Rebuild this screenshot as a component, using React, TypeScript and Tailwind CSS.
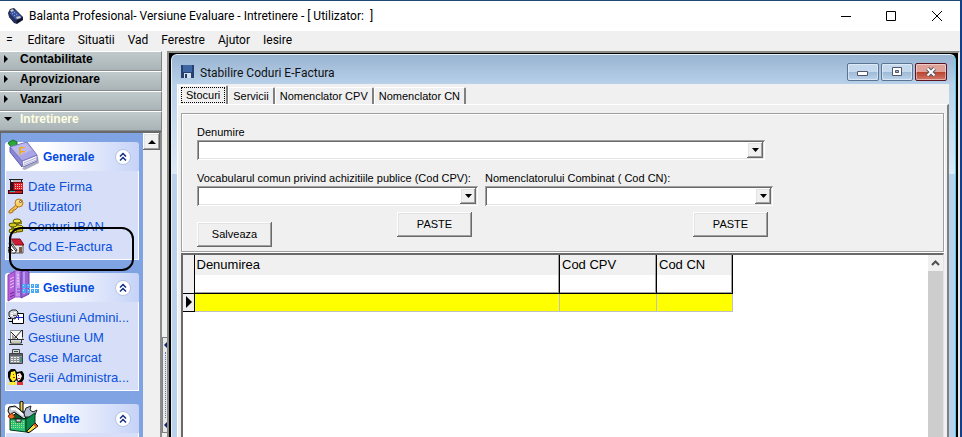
import { ReactNode, useState } from 'react'

const accordion = ['Contabilitate', 'Aprovizionare', 'Vanzari', 'Intretinere']
const menus = ['Editare', 'Situatii', 'Vad', 'Ferestre', 'Ajutor', 'Iesire']
const tabs = ['Stocuri', 'Servicii', 'Nomenclator CPV', 'Nomenclator CN']

const raised =
  'bg-[#f0f0f0] shadow-[inset_-1px_-1px_0_#696969,inset_1px_1px_0_#fff,inset_-2px_-2px_0_#a0a0a0,inset_2px_2px_0_#e3e3e3]'

function Icon({ children, size = 16 }: { children: ReactNode; size?: number }) {
  return (
    <svg
      width={size}
      height={size}
      viewBox={`0 0 ${size} ${size}`}
      className="shrink-0"
      aria-hidden="true"
    >
      {children}
    </svg>
  )
}

const AppIcon = () => (
  <Icon>
    <path d="M0 5 L2 1 L6 0 L9 3 L15 9 L15 12 L9 16 L6 15 L1 9 Z" fill="#1a2440" />
    <path d="M1 5 L7 2 L14 9 L8 12 Z" fill="#3c56a0" />
    <path d="M1 6 L8 13 L8 15 L1 9 Z" fill="#26366c" />
    <path d="M9 13 L14 10 L14 12 L9 15 Z" fill="#0c1020" />
    <path d="M2 2 L5 1 L6 3 L3 4 Z M8 9 L12 8 L13 10 L9 11 Z" fill="#c3cad2" />
    <path d="M4 5h1v1h-1zM6 4h1v1h-1zM6 7h1v1h-1zM8 6h1v1h-1z" fill="#8ba0dc" />
  </Icon>
)

const BookIcon = () => (
  <Icon size={32}>
    <path d="M15 30 L18 31 L32 24 L31 18 L29 17 Z" fill="#70789c" opacity=".6" />
    <path d="M1 4 L6 1 L10 3 L10 7 L4 8 Z" fill="#2aa83a" stroke="#0c6c1c" />
    <path d="M3 8 L3 13 L15 28 L16 22 Z" fill="#8a86d6" stroke="#5e5aa8" />
    <path d="M15 22 L30 16 L30 22 L16 28 Z" fill="#f1f1fb" stroke="#7873b0" />
    <path d="M17 24 L29 19 M17 26 L29 21" stroke="#b4b4dc" />
    <path d="M3 8 L20 3 L30 16 L15 22 Z" fill="#a9a5e6" stroke="#7a76c4" />
    <path d="M4 8 L19 4 L25 11 L12 17 Z" fill="#c6c4f4" opacity=".6" />
    <text x="12" y="16" fontSize="11" fontWeight="bold" fontFamily="Liberation Sans, sans-serif" fill="#f0ac10">
      F
    </text>
  </Icon>
)

const ServerIcon = () => (
  <Icon size={32}>
    <path d="M1 5 L8 1 L8 27 L1 31 Z" fill="#b65fd8" stroke="#8a3cb4" />
    <path d="M3 9 L7 7 M3 12 L7 10 M3 15 L7 13 M3 18 L7 16" stroke="#edc6fa" />
    <path d="M3 24 L7 22 M3 27 L7 25" stroke="#6a2496" />
    <path d="M8 1 L13 0 L14 27 L8 27 Z" fill="#c696f0" stroke="#9458cc" />
    <path d="M10 5h2M10 8h2M10 11h2M10 14h2" stroke="#f2dcff" />
    <path d="M10 19h3M10 22h3" stroke="#7d44b8" />
    <path d="M14 2 L18 0 L22 2 L22 24 L14 28 Z" fill="#9664d4" stroke="#6c3cac" />
    <path d="M17 2v22" stroke="#bb96ec" strokeWidth="2" />
    <path
      d="M15 14h4v4h-4zM20 14h3v4h-3zM24 14h3v4h-3zM28 14h4v4h-4zM15 19h4v4h-4zM20 19h3v4h-3zM24 19h3v4h-3zM28 19h4v4h-4z"
      fill="#4aa6f4"
    />
    <path d="M16 15h1v1h-1zM21 15h1v1h-1zM25 15h1v1h-1zM29 15h1v1h-1zM16 20h1v1h-1zM21 20h1v1h-1zM25 20h1v1h-1zM29 20h1v1h-1z" fill="#b4e4ff" />
  </Icon>
)

const ToolboxIcon = () => (
  <Icon size={32}>
    <path d="M13 1 L15 0 L16 1 L16 12 L13 12 Z" fill="#efcf4a" stroke="#000" />
    <path d="M3 18 L10 11 L28 11 L19 18 Z" fill="#0a5c30" stroke="#000" />
    <path d="M2 6 L8 5 L12 8 L20 15 L17 18 L7 11 L3 14 L1 10 Z" fill="#c6cad2" stroke="#000" />
    <path d="M4 8 L9 8 L16 14" fill="none" stroke="#fff" strokeWidth="2" />
    <path d="M17 12 L19 7 L24 5 L23 9 L26 11 L30 9 L28 14 L23 16 L18 16 Z" fill="#b4bed0" stroke="#222" />
    <path d="M1 15 L5 12 L8 16 L4 19 Z" fill="#f06a28" stroke="#7c2300" />
    <path d="M3 18 L19 18 L19 31 L3 29 Z" fill="#2cc07a" stroke="#003c18" />
    <path d="M19 18 L28 12 L28 24 L19 31 Z" fill="#0a8a4c" stroke="#003c18" />
    <path d="M4 20.500h14M4 22.500h14M4 24.500h14M4 26.500h14" stroke="#a4e87c" strokeDasharray="1 1" />
    <path d="M9 18h5v3h-5z" fill="#d8dde0" stroke="#222" />
    <path d="M20 30 L28 22 L31 25 L23 31 L20 32 Z" fill="#f7dc4c" stroke="#000" />
    <path d="M27 23 L30 26" stroke="#e0521b" strokeWidth="2" />
  </Icon>
)

const DateIcon = () => (
  <Icon>
    <path d="M1 1.500h14M2.500 1v4M13.500 1v3" stroke="#222" fill="none" />
    <path d="M5 2h8v2h-8z" fill="#bfc3c8" />
    <path d="M2 4h3v9h-3z" fill="#31101a" />
    <path d="M5 4h10v9h-10z" fill="#701018" />
    <path d="M6 5h9v7h-9z" fill="#e01c28" />
    <path d="M0 12h15v4h-15z" fill="#3a0a10" />
    <path d="M1 13h13v2h-13z" fill="#d01c28" />
    <path d="M7 6h1v1h-1zM9 6h1v1h-1zM11 6h1v1h-1zM13 6h1v1h-1zM7 8h1v1h-1zM9 8h1v1h-1zM11 8h1v1h-1zM13 8h1v1h-1zM7 10h1v1h-1zM9 10h1v1h-1zM11 10h1v1h-1zM13 10h1v1h-1z" fill="#ffc4b4" />
    <path d="M2 13.500h5" stroke="#28b7b9" />
  </Icon>
)

const KeyIcon = () => (
  <Icon>
    <path d="M8 7 L1 13 L1 15 L3 15 L5 14 L5 12 L7 12 L10 9 Z" fill="#f2bd49" stroke="#a8701c" />
    <circle cx="11" cy="5" r="4" fill="#f8cf68" stroke="#b87c20" />
    <path d="M8.500 4.500 A3 3 0 0 1 11.500 2.500" stroke="#fff2b4" fill="none" />
    <circle cx="12.500" cy="3.500" r="1" fill="#fff" stroke="#7b4c10" />
  </Icon>
)

const CoinsIcon = () => (
  <Icon>
    <path d="M5 3h9v3h-3v2h4v6h-6v1h-8v-4h2v-3h-2v-3h4z" fill="#8a8408" />
    <ellipse cx="10" cy="12" rx="5" ry="2" fill="#c4ba18" stroke="#5c5604" />
    <ellipse cx="10" cy="9" rx="5" ry="2" fill="#ece234" stroke="#5c5604" />
    <ellipse cx="5" cy="7" rx="4" ry="2" fill="#d4ca20" stroke="#5c5604" />
    <ellipse cx="9" cy="3" rx="4" ry="2" fill="#f0e63c" stroke="#5c5604" />
    <ellipse cx="5" cy="13" rx="4" ry="2" fill="#ece234" stroke="#5c5604" />
  </Icon>
)

const HouseIcon = () => (
  <Icon>
    <path d="M5 6h10v9h-10z" fill="#e4e4e6" stroke="#555" />
    <path d="M3 1 L12 1 L16 7 L7 7 Z" fill="#d01c34" stroke="#7b0d1b" />
    <path d="M3 1 L0 6 L4 8 L7 7 Z" fill="#8c8c90" />
    <path d="M11 9h3v6h-3z" fill="#7c5a48" />
    <path d="M0 10 L4 6 L9 12 L7 15 L1 15 Z" fill="#fff" stroke="#333" />
    <path d="M1 9 L5 13 M3 7 L8 13" stroke="#111" />
    <path d="M2 12h2v2h-2z" fill="#b87848" />
  </Icon>
)

const SafeHandIcon = () => (
  <Icon>
    <path d="M4.500 4.500h11v10h-11z" fill="#fff" stroke="#000" />
    <path d="M1 3 L4 1 L8 1 L10 3 L9 7 L7 10 L3 9 L1 7 Z" fill="#d2d6dc" stroke="#222" />
    <path d="M3 4h2v1h-2zM6 3h2v1h-2zM3 6h3v1h-3z" fill="#fff" />
    <path d="M5 6h3v1h-3zM6 8h2v1h-2z" fill="#555" />
    <path d="M7 8.500h8M10.500 6v5" stroke="#1d1ddb" />
    <path d="M0 9.500h3M1 12.500h3" stroke="#000" />
  </Icon>
)

const ScaleIcon = () => (
  <Icon>
    <path d="M2.500 1.500h12v9h-12z" fill="#f8f8f8" stroke="#8e9299" />
    <path d="M3 3 L10 10 M14 1 L6 10 M14.500 1 L14.500 8" stroke="#222" />
    <path d="M4 5 L8 10 L4 10 Z" fill="#999" />
    <path d="M0 10.500h16M2.500 11v3h11v-3M1 15.500h14" stroke="#333" fill="none" />
    <path d="M4 12h8v2h-8z" fill="#c9c9a4" />
  </Icon>
)

const RegisterIcon = () => (
  <Icon>
    <path d="M4.500 .5h7v4h-7z" fill="#dadada" stroke="#444" />
    <path d="M6 2.500h4" stroke="#2a5c54" />
    <path d="M1.500 4.500h13v10h-13z" fill="#8f9597" stroke="#3c4042" />
    <path d="M2 5h12v2h-12z" fill="#5c6264" />
    <path d="M3 8h2v1h-2zM6 8h2v1h-2zM9 8h2v1h-2zM3 10h2v1h-2zM6 10h2v1h-2zM9 10h2v1h-2zM3 12h2v1h-2zM6 12h2v1h-2zM9 12h2v1h-2z" fill="#eee" />
    <path d="M12 8h2v5h-2z" fill="#508a7c" />
  </Icon>
)

const PeopleIcon = () => (
  <Icon>
    <path d="M0 3 L3 0 L7 0 L9 3 L14 2 L16 5 L16 10 L14 13 L10 13 L8 11 L6 14 L2 13 L0 8 Z" fill="#000" />
    <path d="M3 3 L7 2 L8 6 L8 10 L5 13 L2 9 Z" fill="#ffef20" />
    <path d="M5 5h1v1h-1zM5 8h2v1h-2z" fill="#c31212" />
    <path d="M9 5 L12 4 L14 7 L12 11 L10 12 L9 8 Z" fill="#fff4e6" />
    <path d="M10 6h1v1h-1zM10 9h2v1h-2z" fill="#c02020" />
    <path d="M1 13h7v3h-7z" fill="#f4ec3c" />
    <path d="M9 13h6v3h-6z" fill="#e23434" />
  </Icon>
)

const groups = [
  {
    title: 'Generale',
    icon: <BookIcon />,
    items: [
      { label: 'Date Firma', icon: <DateIcon /> },
      { label: 'Utilizatori', icon: <KeyIcon /> },
      { label: 'Conturi IBAN', icon: <CoinsIcon /> },
      { label: 'Cod E-Factura', icon: <HouseIcon /> },
    ],
  },
  {
    title: 'Gestiune',
    icon: <ServerIcon />,
    items: [
      { label: 'Gestiuni Admini...', icon: <SafeHandIcon /> },
      { label: 'Gestiune UM', icon: <ScaleIcon /> },
      { label: 'Case Marcat', icon: <RegisterIcon /> },
      { label: 'Serii Administra...', icon: <PeopleIcon /> },
    ],
  },
  { title: 'Unelte', icon: <ToolboxIcon />, items: [] },
]

function TaskGroup({ group }: { group: (typeof groups)[number] }) {
  return (
    <section>
      <h2 className="flex h-[29px] items-center rounded-t-[3px] bg-linear-to-r from-white from-30% to-[#c6d3f7] pr-2 pl-0.5 text-xs font-bold text-[#0049e0]">
        <span className="-mt-1 shrink-0">{group.icon}</span>
        <span className="ml-1 flex-1">{group.title}</span>
        <button aria-label={`Restrange ${group.title}`}>
          <Icon>
            <circle cx="8" cy="8" r="7.5" fill="#fff" stroke="#b4c2e4" />
            <path d="M5 7.5 L8 4.5 L11 7.5 M5 11.5 L8 8.5 L11 11.5" fill="none" stroke="#122c80" strokeWidth="1.5" />
          </Icon>
        </button>
      </h2>
      <ul className="min-h-7 border border-t-0 border-white bg-[#d6dff7] pt-[5px] pb-[3px]">
        {group.items.map((item) => (
          <li key={item.label} className="h-5 pl-0.5">
            <a href="#" className="flex h-5 items-center gap-1 text-[13px] whitespace-nowrap text-[#0a50dc]">
              {item.icon}
              <span className="pt-0.5">{item.label}</span>
            </a>
          </li>
        ))}
      </ul>
    </section>
  )
}

function Sidebar() {
  return (
    <aside className="flex w-[162px] shrink-0 flex-col">
      {accordion.map((name) => {
        const open = name === 'Intretinere'
        return (
          <button
            key={name}
            className={`flex h-5 shrink-0 items-center border-t border-r border-b border-t-white border-r-[#808080] border-b-[#868c8e] bg-linear-to-b from-[#c0c9cb] to-[#aab3b5] pb-1 pl-1 text-left text-xs leading-4 font-bold ${
              open ? 'text-[#ffffe1]' : 'text-black'
            }`}
          >
            <svg width="8" height="8" viewBox="0 0 8 8" className="mr-2" aria-hidden="true">
              <path d={open ? 'M0 2h8L4 6z' : 'M0 0v8L4 4z'} fill="#000" />
            </svg>
            {name}
          </button>
        )
      })}
      <div className="flex min-h-0 flex-1 border-t-2 border-r-2 border-l border-t-[#696969] border-r-[#8c8c8c] border-l-[#696969]">
        <nav className="relative flex-1 bg-[#7fa3e3] px-1 pt-[9px]">
          <div className="flex flex-col gap-[13px]">
            {groups.map((group) => (
              <TaskGroup key={group.title} group={group} />
            ))}
          </div>
          {/* marker around the current entry */}
          <div className="pointer-events-none absolute top-[94px] left-2 h-[44px] w-[125px] rounded-xl border-2 border-black" />
        </nav>
        <div className="w-[17px] bg-[#f0f0f0]">
          <button aria-label="Sus" className={`flex h-[17px] w-full items-center justify-center ${raised}`}>
            <svg width="8" height="4" viewBox="0 0 8 4" aria-hidden="true">
              <path d="M0 4h8L4 0z" />
            </svg>
          </button>
        </div>
      </div>
    </aside>
  )
}

function Splitter() {
  return (
    <div className="flex w-[5px] shrink-0 flex-col justify-end pb-1">
      <div className="flex h-[96px] flex-col items-center justify-between border-t border-b border-l border-[#808080] bg-[#e8e8e8] py-1">
        <svg width="3" height="6" viewBox="0 0 3 6" aria-hidden="true">
          <path d="M3 0v6L0 3z" fill="#0a246a" />
        </svg>
        <div className="my-1 w-px flex-1 border-l border-dotted border-[#5a74b4]" />
        <svg width="3" height="6" viewBox="0 0 3 6" aria-hidden="true">
          <path d="M3 0v6L0 3z" fill="#0a246a" />
        </svg>
      </div>
    </div>
  )
}

function Combo({ id, label, className = '' }: { id: string; label: string; className?: string }) {
  return (
    <div className={className}>
      <label htmlFor={id} className="block h-[17px] leading-[18px] whitespace-nowrap">
        {label}
      </label>
      <div className="relative">
        <select
          id={id}
          className="block h-5 w-full appearance-none bg-white px-1 shadow-[inset_1px_1px_0_#a0a0a0,inset_-1px_-1px_0_#fff,inset_2px_2px_0_#696969,inset_-2px_-2px_0_#e3e3e3] outline-none"
        />
        <span
          className={`pointer-events-none absolute top-0.5 right-0.5 bottom-0.5 flex w-4 items-center justify-center ${raised}`}
        >
          <svg width="7" height="4" viewBox="0 0 7 4" aria-hidden="true">
            <path d="M0 0h7L3.500 4z" />
          </svg>
        </span>
      </div>
    </div>
  )
}

function PushButton({ children, className = '' }: { children: ReactNode; className?: string }) {
  return <button className={`h-[25px] w-[75px] ${raised} ${className}`}>{children}</button>
}

const captionButton =
  'flex h-[18px] w-8 items-center justify-center rounded-[2px] border shadow-[inset_0_0_0_1px_rgba(255,255,255,0.45)]'

function FacturaWindow() {
  const [tab, setTab] = useState('Stocuri')

  return (
    <main className="flex min-w-0 flex-1 flex-col rounded-t-md border-t border-r border-l border-t-[#e8f3fc] border-r-[#4fd0ea] border-l-[#e2eefa] bg-[linear-gradient(#99b4d1_0,#b9d1ea_30px,#dce9f7_119px,#b9d1ea_119px)] pr-1.5 pl-[5px]">
      <div className="flex h-[29px] shrink-0 items-center pr-0.5 pl-1">
        <svg width="13" height="13" viewBox="0 0 13 13" className="mt-1" aria-hidden="true">
          <path d="M0 0h13v13h-13z" fill="#27406f" />
          <path d="M2 0h9v7h-9z" fill="#3f66a5" />
          <path d="M3 8h7v5h-7z" fill="#d6e0ea" />
          <path d="M4 9h2v4h-2z" fill="#27406f" />
        </svg>
        <h1 className="mt-1.5 ml-1.5 flex-1 font-[Roboto,sans-serif] text-xs text-[#111]">
          Stabilire Coduri E-Factura
        </h1>
        <div className="mt-1 flex gap-0.5">
          <button
            aria-label="Minimizare"
            className={`${captionButton} border-[#5c7494] bg-[linear-gradient(#c4d9ee_50%,#9db9d6_50%,#bdd5ec)]`}
          >
            <svg width="12" height="6" viewBox="0 0 12 6" className="mt-1" aria-hidden="true">
              <path d="M.5 .5h10v4h-10z" fill="#fff" stroke="#535666" />
            </svg>
          </button>
          <button
            aria-label="Maximizare"
            className={`${captionButton} border-[#5c7494] bg-[linear-gradient(#c4d9ee_50%,#9db9d6_50%,#bdd5ec)]`}
          >
            <svg width="12" height="10" viewBox="0 0 12 10" aria-hidden="true">
              <path d="M1.500 .5h9v8h-9z" fill="#fff" stroke="#535666" />
              <path d="M4.500 3.500h3v2h-3z" fill="#9db9d6" stroke="#535666" />
            </svg>
          </button>
          <button
            aria-label="Inchide"
            className={`${captionButton} border-[#5a1420] bg-[linear-gradient(#e0a198_50%,#b8412c_50%,#d4786a)]`}
          >
            <svg width="12" height="10" viewBox="0 0 12 10" aria-hidden="true">
              <path d="M2.500 1.500 L9.500 8.500 M9.500 1.500 L2.500 8.500" stroke="#535666" strokeWidth="4" />
              <path d="M2.500 1.500 L9.500 8.500 M9.500 1.500 L2.500 8.500" stroke="#fff" strokeWidth="2" />
            </svg>
          </button>
        </div>
      </div>

      <div className="flex min-h-0 flex-1 flex-col border-l border-white bg-[#f0f0f0] text-[11px]">
        <div role="tablist" className="flex h-5 shrink-0 items-end pl-px">
          {tabs.map((name) => {
            const selected = name === tab
            return (
              <button
                key={name}
                role="tab"
                aria-selected={selected}
                onClick={() => setTab(name)}
                className={`rounded-t-[2px] border-t border-r-2 border-l border-t-white border-r-[#808080] border-l-white whitespace-nowrap ${
                  selected ? 'h-[19px] p-px pb-0.5' : 'h-[17px] px-1'
                }`}
              >
                {selected ? (
                  <span className="block h-4 border border-dotted border-black px-1 leading-[14px]">{name}</span>
                ) : (
                  name
                )}
              </button>
            )
          })}
        </div>

        <div className="flex min-h-0 flex-1 flex-col border-t border-r-2 border-t-white border-r-[#808080] pt-2 pr-[3px] pl-[3px]">
          <form
            className="shrink-0 border border-[#a0a0a0] px-[15px] pt-[9px] pb-1 shadow-[inset_1px_1px_0_#fff,1px_1px_0_#fff]"
            onSubmit={(e) => e.preventDefault()}
          >
            <div className="max-w-[576px]">
              <Combo id="denumire" label="Denumire" className="mr-2" />
              <div className="mt-[9px] grid grid-cols-[281fr_288fr] gap-x-[7px]">
                <Combo id="cpv" label="Vocabularul comun privind achizitiile publice (Cod CPV):" />
                <Combo id="cn" label="Nomenclatorului Combinat ( Cod CN):" />
                <div className="flex justify-between pt-1.5 pr-1.5">
                  <PushButton className="mt-2.5">Salveaza</PushButton>
                  <PushButton>PASTE</PushButton>
                </div>
                <div className="flex justify-end pt-1.5 pr-[5px]">
                  <PushButton>PASTE</PushButton>
                </div>
              </div>
            </div>
          </form>

          <div className="mt-px flex min-h-0 flex-1 border-t-2 border-r border-l-2 border-t-[#696969] border-r-[#e3e3e3] border-l-[#696969] bg-white">
            <div className="flex-1">
              <table className="w-[550px] table-fixed border-collapse font-['Liberation_Sans',Arial,sans-serif] text-[13px]">
                <colgroup>
                  <col className="w-[11px]" />
                  <col />
                  <col className="w-[97px]" />
                  <col className="w-[76px]" />
                </colgroup>
                <thead>
                  <tr className="h-[38px] text-left align-top leading-5">
                    <th className="border-r border-b border-black bg-[#f0f0f0] p-0" aria-label="Rand curent" />
                    {['Denumirea', 'Cod CPV', 'Cod CN'].map((name) => (
                      <th
                        key={name}
                        className="border-r border-b border-black bg-[linear-gradient(#f0f0f0_20px,#fff_20px)] pl-0.5 font-normal shadow-[inset_-1px_-1px_0_#a0a0a0]"
                      >
                        {name}
                      </th>
                    ))}
                  </tr>
                </thead>
                <tbody>
                  <tr className="h-[18px]">
                    <td className="border-r border-b border-black bg-[#f0f0f0] p-0">
                      <svg width="6" height="12" viewBox="0 0 6 12" className="ml-[3px]" aria-hidden="true">
                        <path d="M0 0v12L6 6z" />
                      </svg>
                    </td>
                    <td className="border-r border-b border-[#c0c0c0] bg-[#ffff00]" />
                    <td className="border-r border-b border-[#c0c0c0] bg-[#ffff00]" />
                    <td className="border-r border-b border-[#c0c0c0] bg-[#ffff00]" />
                  </tr>
                </tbody>
              </table>
            </div>
            <div className="flex w-[15px] flex-col bg-[#cdcdcd]">
              <button aria-label="Deruleaza sus" className="flex h-4 items-center justify-center bg-[#f0f0f0]">
                <svg width="9" height="6" viewBox="0 0 9 6" aria-hidden="true">
                  <path d="M1 5 L4.500 1.500 L8 5" fill="none" stroke="#505050" strokeWidth="2" />
                </svg>
              </button>
            </div>
          </div>
        </div>
      </div>
    </main>
  )
}

export default function App() {
  return (
    <div className="flex h-screen flex-col overflow-hidden border-t border-r-2 border-t-[#1b4a75] border-r-[#12408a] bg-[#f0f0f0] font-['Liberation_Sans',Arial,sans-serif] text-black">
      <header className="flex h-[30px] shrink-0 items-center bg-white pl-2">
        <AppIcon />
        <div className="ml-[5px] flex-1 font-[Roboto,sans-serif] text-xs whitespace-pre">
          {'Balanta Profesional- Versiune Evaluare - Intretinere - [ Utilizator:  ]'}
        </div>
        <div className="flex">
          <button aria-label="Minimizare" className="flex w-[45px] justify-center">
            <svg width="11" height="11" viewBox="0 0 11 11" aria-hidden="true">
              <path d="M0 5.500h10" stroke="#000" />
            </svg>
          </button>
          <button aria-label="Maximizare" className="flex w-[45px] justify-center">
            <svg width="11" height="11" viewBox="0 0 11 11" aria-hidden="true">
              <path d="M.5 .5h9v9h-9z" fill="none" stroke="#000" />
            </svg>
          </button>
          <button aria-label="Inchide" className="flex w-[46px] justify-center">
            <svg width="11" height="11" viewBox="0 0 11 11" aria-hidden="true">
              <path d="M0 0 L10 10 M10 0 L0 10" stroke="#000" />
            </svg>
          </button>
        </div>
      </header>

      <nav className="flex h-5 shrink-0 items-center gap-[13px] pb-0.5 pl-1.5 font-[Roboto,sans-serif] text-xs">
        <button className="mr-0.5">=</button>
        {menus.map((name) => (
          <button key={name}>{name}</button>
        ))}
      </nav>

      <div className="flex min-h-0 flex-1">
        <Sidebar />
        <Splitter />
        <div className="flex min-w-0 flex-1 border-t-2 border-r-2 border-l-2 border-t-[#8a8a86] border-r-[#e8e8e8] border-l-[#8a8a86] bg-black pt-px pr-0.5 pl-0.5">
          <FacturaWindow />
        </div>
      </div>
    </div>
  )
}
